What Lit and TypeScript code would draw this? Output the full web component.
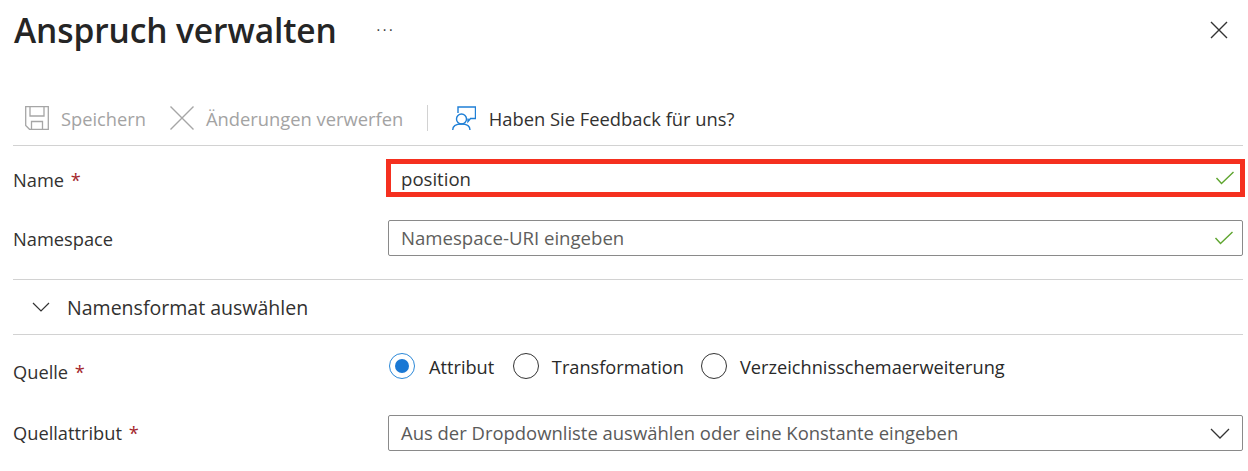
import { LitElement, html, css, svg } from "lit";
import { customElement } from "lit/decorators.js";

const check = svg`<svg class="chk" width="20" height="14" viewBox="0 0 20 14"><path d="M1.5 7 L6.5 12.5 L18.5 1" fill="none" stroke="#5ea52f" stroke-width="1.4"/></svg>`;

@customElement("app-root")
export class AppRoot extends LitElement {
  static styles = css`
    :host { display: block; width: 1248px; height: 471px; overflow: hidden; background: #fff; color: #292929;
      font-family: "Open Sans", "Noto Sans", sans-serif; font-size: 18.25px; box-sizing: border-box; padding: 0 5px 0 13px; }
    * { box-sizing: border-box; }
    .head { height: 62px; display: flex; align-items: center; }
    h1 { margin: 0 0 0 1px; font-size: 33.5px; font-weight: 600; color: #252525; letter-spacing: -0.1px; line-height: 1; width: 362.5px; }
    .dots { font-size: 14px; letter-spacing: 2.6px; color: #333; flex: 1; line-height: 1; margin-top: -2px; }
    .close { margin-right: 15px; margin-top: -2px; display: block; }
    .toolbar { margin-top: 30px; height: 54px; padding: 0 0 1px 12px; display: flex; align-items: center; border-bottom: 1px solid #d2d2d2; color: #a3a3a3; font-size: 18.35px; }
    .toolbar svg { display: block; flex: none; }
    .save { margin-right: 12px; }
    .sp { margin-right: 24px; font-size: 18.25px; }
    .x { margin-right: 12px; }
    .sep { width: 1px; height: 26px; background: #d2d2d2; margin: 0 24px; }
    .fb { margin-right: 12.5px; }
    .dark { color: #323130; }
    .row { display: grid; grid-template-columns: 375px 1fr; align-items: center; }
    .r1 { height: 38px; margin-top: 13px; margin-right: -2px; }
    .r1 label { padding-top: 2px; }
    .r2 { height: 36px; margin-top: 23px; }
    .star { color: #a4262c; margin-left: 2px; }
    .field { height: 100%; border: 1px solid #8a8a8a; border-radius: 2px; display: flex; align-items: center; justify-content: space-between; padding: 0 8px 2px 12px; color: #605e5c; font-size: 18.45px; }
    .field svg { flex: none; margin-top: 2px; }
    .ns { font-size: 18.6px; }
    .red { border: 5px solid #f5301f; border-radius: 0; margin-left: -2px; padding: 0 5px 0 10px; color: #323130; font-size: 18.6px; }
    .red svg { margin-top: 0; }
    hr { border: 0; border-top: 1px solid #d2d2d2; margin: 0; }
    .h1r { margin-top: 23px; }
    .coll { height: 54px; display: flex; align-items: center; padding-left: 19px; gap: 17px; font-size: 19.55px; }
    .coll svg { display: block; }
    .r3 { height: 60px; }
    .radios { display: flex; align-items: center; margin-top: 2px; font-size: 18.2px; }
    .lbl3 { padding-top: 13px; }
    .lbl4 { padding-bottom: 2px; }
    .radio { width: 26px; height: 26px; border-radius: 50%; border: 1px solid #333; margin-left: 1px; flex: none; margin-right: 13px; }
    .radio.on { border-color: #2b88d8; display: flex; align-items: center; justify-content: center; margin-right: 14px; }
    .radio.on::after { content: ""; width: 14px; height: 14px; border-radius: 50%; background: #1a78d4; }
    .r { display: flex; align-items: center; margin-right: 18px; }
    .r span { padding-top: 2px; }
    .r.t { margin-right: 16.2px; }
    .r.t .radio { margin-right: 12.6px; }
    .r4 { height: 36px; margin-top: 20px; }
    .sel { padding-right: 12px; color: #5a5a5a; }
  `;

  render() {
    return html`
      <div class="head">
        <h1>Anspruch verwalten</h1>
        <div class="dots">···</div>
        <svg class="close" width="18" height="18" viewBox="0 0 18 18"><path d="M1 1 L17 17 M17 1 L1 17" stroke="#333" stroke-width="1.4" fill="none"/></svg>
      </div>
      <div class="toolbar">
        <svg class="save" width="24" height="24" viewBox="0 0 24 24" fill="none" stroke="#a6a6a6" stroke-width="1.3"><path d="M.7 .7 H23.3 V23.3 H4.5 L.7 19.5 Z M5 .7 V10 H19 V.7 M6.5 23.3 V15.5 H17.5 V23.3"/></svg>
        <span class="sp">Speichern</span>
        <svg class="x" width="24" height="24" viewBox="0 0 24 24"><path d="M.5 .5 L23.5 23.5 M23.5 .5 L.5 23.5" stroke="#a6a6a6" stroke-width="1.4" fill="none"/></svg>
        <span>Änderungen verwerfen</span>
        <div class="sep"></div>
        <svg class="fb" width="24" height="24" viewBox="0 0 24 24" fill="none" stroke="#1f7fd6" stroke-width="1.4"><path d="M6 7 V1 H23.5 V12.5 H18.5 L16 15.5 V12.5"/><circle cx="9.5" cy="13" r="5"/><path d="M.7 24 C.7 20 4 18 9.5 18 C15 18 18 20 18 24"/></svg>
        <span class="dark">Haben Sie Feedback für uns?</span>
      </div>
      <div class="row r1">
        <label class="dark">Name <span class="star">*</span></label>
        <div class="field red"><span>position</span>${check}</div>
      </div>
      <div class="row r2">
        <label class="dark">Namespace</label>
        <div class="field ns"><span>Namespace-URI eingeben</span>${check}</div>
      </div>
      <hr class="h1r" />
      <div class="coll">
        <svg width="18" height="10" viewBox="0 0 18 10"><path d="M1 1 L9 9 L17 1" stroke="#333" stroke-width="1.2" fill="none"/></svg>
        <span class="dark">Namensformat auswählen</span>
      </div>
      <hr />
      <div class="row r3">
        <label class="dark lbl3">Quelle <span class="star">*</span></label>
        <div class="radios">
          <div class="r"><div class="radio on"></div><span>Attribut</span></div>
          <div class="r t"><div class="radio"></div><span>Transformation</span></div>
          <div class="r"><div class="radio"></div><span>Verzeichnisschemaerweiterung</span></div>
        </div>
      </div>
      <div class="row r4">
        <label class="dark lbl4">Quellattribut <span class="star">*</span></label>
        <div class="field sel"><span>Aus der Dropdownliste auswählen oder eine Konstante eingeben</span>
          <svg width="20" height="11" viewBox="0 0 20 11"><path d="M1 1 L10 10 L19 1" stroke="#333" stroke-width="1.3" fill="none"/></svg></div>
      </div>
    `;
  }
}
